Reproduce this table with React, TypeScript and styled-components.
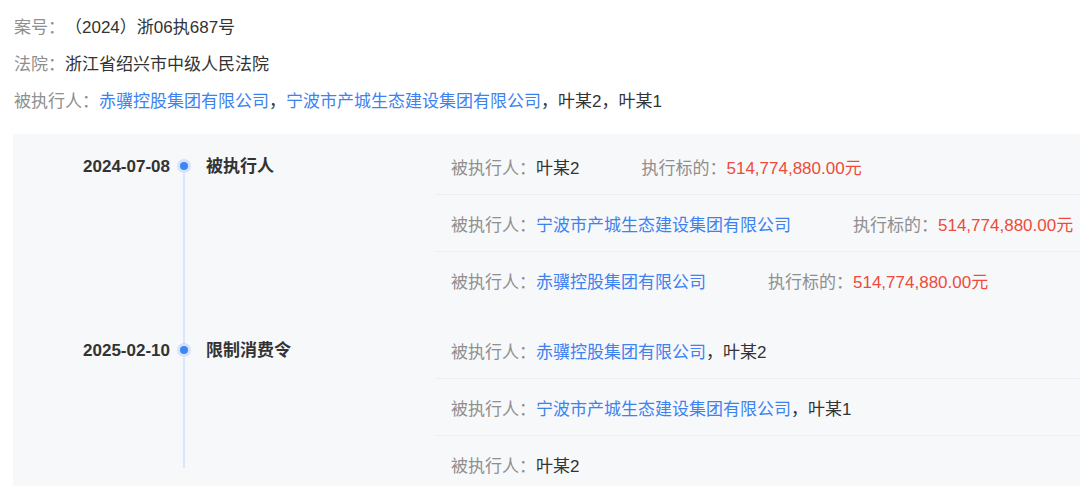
import styled, { createGlobalStyle } from 'styled-components'

const GlobalStyle = createGlobalStyle`
  body {
    margin: 0;
    background: #ffffff;
    font-family: "Liberation Sans", "Noto Sans CJK SC", sans-serif;
    font-size: 17px;
    color: #333333;
    text-spacing-trim: space-all;
  }
`

const Page = styled.div`
  padding: 9px 0 0 13px;
  overflow: hidden;
  height: 477px;
`

const Info = styled.div`
  display: flex;
  flex-direction: column;
  padding-left: 1px;
`

const InfoLine = styled.div`
  line-height: 37px;
  white-space: nowrap;
`

const Label = styled.span`
  color: #8f8f8f;
`

const Link = styled.a`
  color: #3d82f0;
  text-decoration: none;
`

const Amount = styled.span`
  color: #ee4b3b;
`

const Panel = styled.div`
  margin-top: 14px;
  background: #f7f8fa;
  padding-top: 4px;
  display: flex;
  flex-direction: column;
`

const Group = styled.div<{ $last?: boolean }>`
  display: flex;
  padding-bottom: ${({ $last }) => ($last ? '0' : '13px')};
`

const DateCol = styled.div`
  width: 157px;
  flex-shrink: 0;
  text-align: right;
  line-height: 57px;
  font-weight: 700;
  color: #333333;
`

const Axis = styled.div<{ $last?: boolean }>`
  width: 28px;
  flex-shrink: 0;
  display: flex;
  flex-direction: column;
  align-items: center;
  padding-bottom: ${({ $last }) => ($last ? '25px' : '0')};
  margin-bottom: ${({ $last }) => ($last ? '0' : '-13px')};
`

const Dot = styled.span`
  width: 8px;
  height: 8px;
  border-radius: 50%;
  background: #3d86f5;
  box-shadow: 0 0 0 3px rgba(61, 134, 245, 0.18);
  flex-shrink: 0;
`

const Rail = styled.span<{ $hidden?: boolean }>`
  width: 2px;
  background: ${({ $hidden }) => ($hidden ? 'transparent' : '#d8e7fd')};
`

const RailTop = styled(Rail)`
  height: 22px;
  margin-bottom: 2px;
  flex-shrink: 0;
`

const RailBottom = styled(Rail)`
  flex: 1;
  margin-top: 2px;
`

const Title = styled.div`
  width: 229px;
  flex-shrink: 0;
  margin-left: 8px;
  line-height: 57px;
  font-weight: 600;
  color: #333333;
`

const Rows = styled.div`
  flex: 1;
  display: flex;
  flex-direction: column;
`

const Row = styled.div`
  height: 57px;
  box-sizing: border-box;
  padding-left: 16px;
  display: flex;
  align-items: center;
  white-space: nowrap;
  border-bottom: 1px solid #eeeff2;

  &:last-child {
    border-bottom: none;
  }
`

const Target = styled.span`
  margin-left: 62px;
`

type Party = { name: string; link?: boolean }
type Entry = { parties: Party[]; amount?: string }
type Event = { date: string; title: string; entries: Entry[] }

const events: Event[] = [
  {
    date: '2024-07-08',
    title: '被执行人',
    entries: [
      { parties: [{ name: '叶某2' }], amount: '514,774,880.00元' },
      { parties: [{ name: '宁波市产城生态建设集团有限公司', link: true }], amount: '514,774,880.00元' },
      { parties: [{ name: '赤骥控股集团有限公司', link: true }], amount: '514,774,880.00元' },
    ],
  },
  {
    date: '2025-02-10',
    title: '限制消费令',
    entries: [
      { parties: [{ name: '赤骥控股集团有限公司', link: true }, { name: '叶某2' }] },
      { parties: [{ name: '宁波市产城生态建设集团有限公司', link: true }, { name: '叶某1' }] },
      { parties: [{ name: '叶某2' }] },
    ],
  },
]

const PartyList = ({ parties }: { parties: Party[] }) => (
  <span>
    {parties.map((p, i) => (
      <span key={p.name}>
        {i > 0 && '，'}
        {p.link ? <Link href="#">{p.name}</Link> : p.name}
      </span>
    ))}
  </span>
)

const App = () => {
  return (
    <Page>
      <GlobalStyle />
      <Info>
        <InfoLine>
          <Label>案号：</Label>（2024）浙06执687号
        </InfoLine>
        <InfoLine>
          <Label>法院：</Label>浙江省绍兴市中级人民法院
        </InfoLine>
        <InfoLine>
          <Label>被执行人：</Label>
          <PartyList
            parties={[
              { name: '赤骥控股集团有限公司', link: true },
              { name: '宁波市产城生态建设集团有限公司', link: true },
              { name: '叶某2' },
              { name: '叶某1' },
            ]}
          />
        </InfoLine>
      </Info>

      <Panel>
        {events.map((ev, gi) => {
          const last = gi === events.length - 1
          return (
            <Group key={ev.date} $last={last}>
              <DateCol>{ev.date}</DateCol>
              <Axis $last={last}>
                <RailTop $hidden={gi === 0} />
                <Dot />
                <RailBottom />
              </Axis>
              <Title>{ev.title}</Title>
              <Rows>
                {ev.entries.map((en, ri) => (
                  <Row key={ri}>
                    <Label>被执行人：</Label>
                    <PartyList parties={en.parties} />
                    {en.amount && (
                      <Target>
                        <Label>执行标的：</Label>
                        <Amount>{en.amount}</Amount>
                      </Target>
                    )}
                  </Row>
                ))}
              </Rows>
            </Group>
          )
        })}
      </Panel>
    </Page>
  )
}

export default App
